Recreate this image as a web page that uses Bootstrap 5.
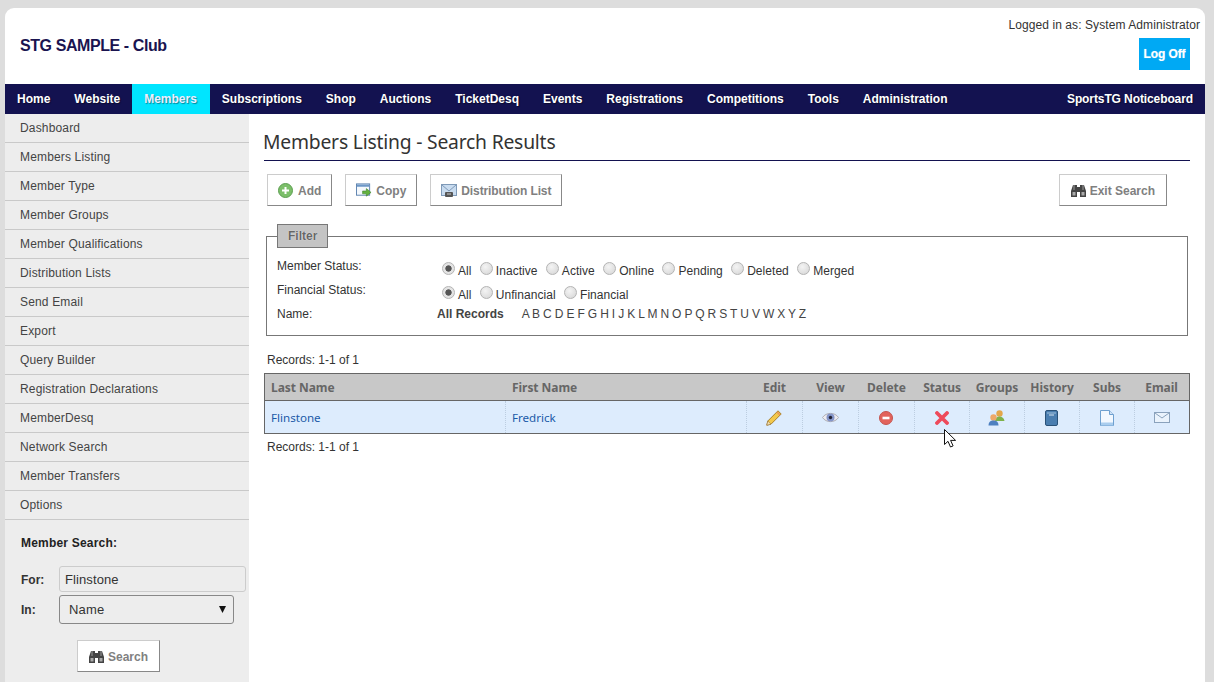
<!DOCTYPE html>
<html lang="en"><head><meta charset="utf-8"><title>Members Listing</title>
<link href="https://cdn.jsdelivr.net/npm/bootstrap@5.3.0/dist/css/bootstrap.min.css" rel="stylesheet">
<style>
html,body{height:100%;overflow:hidden}
body{background:#ddd;font-family:"Liberation Sans",Arial,sans-serif;font-size:12px;color:#333;padding:8px 9px 0 5px}
.shell{background:#fff;border-radius:9px 9px 0 0;height:674px;position:relative;overflow:hidden}
.top-head{height:76px;padding:0 15px}
.club{font-size:16px;font-weight:700;color:#1a1450;margin:0;line-height:76px;letter-spacing:-.42px}
.logged{color:#333;font-size:12px;line-height:14px;padding-top:10px;margin-right:-10px;text-align:right;letter-spacing:.08px}
.logoff{display:block;background:#00a9f4;color:#fff;font-weight:700;font-size:12px;width:51px;height:32px;line-height:33px;text-align:center;text-decoration:none;margin:6px 0 0 auto;letter-spacing:-.1px;text-shadow:0 0 1px #fff8}
.mainbar{background:#131250;height:30px;padding:0}
.mainbar a{color:#fff;font-weight:700;font-size:12px;line-height:30px;padding:0 12px;display:block;text-decoration:none;text-shadow:1px 1px 1px #0006}
.mainbar a.on{background:#00e5ff;color:#eef;padding-right:13px}
.mainbar a.notice{letter-spacing:-.1px}
.cols{height:568px}
.side{width:244px;flex:none;background:#ededed}
.side-list a{display:block;height:29px;line-height:29px;padding-left:15px;color:#444;font-size:12px;letter-spacing:.16px;text-decoration:none;border-bottom:1px solid #c9c9c9}
.side-form{padding:16px 0 0 16px;position:relative}
.side-form h6{font-size:12px;font-weight:700;color:#222;margin:0 0 16px;line-height:14px;letter-spacing:.2px}
.lbl{width:38px;font-weight:700;color:#333;flex:none}
.lbl-up{position:relative;top:-1px}
.box-in{width:187px;height:26px;background:#ededed;border:1px solid #ccc;border-radius:3px;font-size:13px;padding:0 5px;color:#333;font-family:inherit;letter-spacing:.1px;margin-bottom:3px}
.box-sel{width:175px;height:29px;border:1px solid #888;border-radius:3px;font-size:13px;padding:0 9px;color:#333;font-family:inherit;background-color:#ededed;letter-spacing:.2px;appearance:none;background-image:url("data:image/svg+xml,%3Csvg xmlns='http://www.w3.org/2000/svg' width='8' height='7'%3E%3Cpath d='M0 0h7L3.500 7z' fill='%23111'/%3E%3C/svg%3E");background-repeat:no-repeat;background-position:right 6px center}
.gbtn{display:inline-flex;align-items:center;gap:4px;height:32px;background:#fff;border:1px solid;border-color:#ccc #888 #888 #ccc;color:#808080;font-weight:700;font-size:12px;text-decoration:none;padding:1px 10px 0}
.gbtn svg{flex:none}
.gbtn-find{padding:1px 11px 0}
.gbtn-tight{letter-spacing:-.12px}
.content{flex:1;padding:0 15px;min-width:0}
.page-title{font-family:"Noto Sans","Open Sans",sans-serif;font-size:19.300px;font-weight:400;color:#333;margin:0;height:47px;line-height:56px;border-bottom:1px solid #131250;letter-spacing:-.2px;text-indent:-1px}
.toolrow{margin:13px 23px 0 3px;gap:13px}
.fset{margin:18px 2px 0 2px;border:1px solid #777;padding:0 10px;height:112px;position:relative;display:block;min-width:0}
.fset legend{float:none;width:auto;margin:0 0 6px;padding:0 10px;height:24px;line-height:22px;background:#c4c4c4;border:1px solid #777;color:#666;font-weight:700;font-size:12px;text-shadow:0 0 1px #fff}
.frow{height:24px;line-height:24px;color:#333}
.frow .fk{width:160px;flex:none}
.fv{display:flex;align-items:center;padding-top:7px;height:24px}
.rad{appearance:none;width:13px;height:13px;border-radius:50%;border:1px solid #b4b4b4;background:radial-gradient(circle at 40% 35%,#f4f4f4,#d4d4d4);margin:0 3px 0 5px;position:relative;top:-1px;flex:none}
.rad:checked{background:radial-gradient(circle,#555 0 2.800px,#e4e4e4 3.500px)}
.rlab{margin-right:3.300px;position:relative;top:1px;letter-spacing:.05px}
.alpha{margin-left:18px;color:#444;letter-spacing:-.16px}
.recs{color:#333;margin:17px 0 0 3px;line-height:14px}
.grid{width:926px;margin:6px 0 6px;border:1px solid #666;table-layout:fixed;border-collapse:separate;border-spacing:0;font-family:"Noto Sans",sans-serif}
.grid th{background:#c8c8c8;color:#666;font-weight:700;font-size:12px;height:27px;padding:1px 6px 0;border:0;border-bottom:1px solid #666;letter-spacing:-.05px}
.grid td{background:#ddecfd;height:32px;padding:1px 6px 0;border:0;border-right:1px dotted #bccde0;font-size:11.600px;vertical-align:middle}
.grid td:last-child{border-right:0}
.grid th.ic,.grid td.ic{text-align:center;padding:1px 1px 0 0}
.grid a{color:#1a5aa8;text-decoration:none}
.grid svg{display:block;margin:0 auto}
.pointer{position:absolute;left:939px;top:421px}
.recs-low{margin:0 0 0 3px}
.searchline{padding-left:56px;margin-top:16px}
</style></head>
<body>
<div class="shell">
 <header class="top-head d-flex justify-content-between">
  <h1 class="club">STG SAMPLE - Club</h1>
  <div><div class="logged">Logged in as: System Administrator</div><a class="logoff" href="#">Log Off</a></div>
 </header>
 <nav class="mainbar d-flex">
  <a href="#">Home</a><a href="#">Website</a><a href="#" class="on">Members</a><a href="#">Subscriptions</a><a href="#">Shop</a><a href="#">Auctions</a><a href="#">TicketDesq</a><a href="#">Events</a><a href="#">Registrations</a><a href="#">Competitions</a><a href="#">Tools</a><a href="#">Administration</a>
  <a href="#" class="ms-auto notice">SportsTG Noticeboard</a>
 </nav>
 <div class="cols d-flex">
  <aside class="side">
   <div class="side-list">
    <a href="#">Dashboard</a><a href="#">Members Listing</a><a href="#">Member Type</a><a href="#">Member Groups</a><a href="#">Member Qualifications</a><a href="#">Distribution Lists</a><a href="#">Send Email</a><a href="#">Export</a><a href="#">Query Builder</a><a href="#">Registration Declarations</a><a href="#">MemberDesq</a><a href="#">Network Search</a><a href="#">Member Transfers</a><a href="#">Options</a>
   </div>
   <div class="side-form">
    <h6>Member Search:</h6>
    <div class="d-flex align-items-center"><span class="lbl lbl-up">For:</span><input class="box-in" value="Flinstone"></div>
    <div class="d-flex align-items-center"><span class="lbl">In:</span><select class="box-sel"><option>Name</option></select></div>
    <div class="d-flex searchline"><a class="gbtn gbtn-find" href="#"><svg width="15" height="13" viewBox="0 0 15 13"><path d="M2 1h4v2h3V1h4l2 6v6H9V8H6v5H0V7z" fill="#444"/><path d="M1.500 8h3v3.500h-3zM10.500 8h3v3.500h-3z" fill="#aaa"/><path d="M3 1v5M12 1v5" stroke="#999"/></svg>Search</a></div>
   </div>
  </aside>
  <main class="content">
   <h2 class="page-title">Members Listing - Search Results</h2>
   <div class="toolrow d-flex justify-content-start">
    <a class="gbtn" href="#"><svg width="16" height="15" viewBox="0 0 16 15"><circle cx="7.500" cy="7.500" r="7" fill="#7cbf6a" stroke="#5c9e50"/><path d="M7.500 4v7M4 7.500h7" stroke="#fff" stroke-width="2"/></svg>Add</a>
    <a class="gbtn" href="#"><svg width="16" height="15" viewBox="0 0 17 15"><rect x=".5" y=".5" width="14" height="12" fill="#f4f8fc" stroke="#5a80ae"/><path d="M1 1h13v2.500H1z" fill="#6d97c7"/><path d="M7 8h4V5.500L16 9.500l-5 4V11H7z" fill="#62b13f" stroke="#3f7f2a" stroke-width=".6"/></svg>Copy</a>
    <a class="gbtn gbtn-tight" href="#"><svg width="16" height="15" viewBox="0 0 16 15"><rect x=".5" y="1.500" width="15" height="11" fill="#c9dcf0" stroke="#7f9ab8"/><path d="M1 2l7 6 7-6" fill="none" stroke="#7f9ab8"/><rect x="4" y="9" width="8" height="5" rx="1" fill="#555"/><path d="M6 11h4" stroke="#ccc"/></svg>Distribution List</a>
    <a class="gbtn gbtn-find ms-auto" href="#"><svg width="15" height="13" viewBox="0 0 15 13"><path d="M2 1h4v2h3V1h4l2 6v6H9V8H6v5H0V7z" fill="#444"/><path d="M1.500 8h3v3.500h-3zM10.500 8h3v3.500h-3z" fill="#aaa"/><path d="M3 1v5M12 1v5" stroke="#999"/></svg>Exit Search</a>
   </div>
   <fieldset class="fset">
    <legend>Filter</legend>
    <div class="frow d-flex"><span class="fk">Member Status:</span><div class="fv"><input type="radio" class="rad" name="a" checked><span class="rlab">All</span><input type="radio" class="rad" name="a"><span class="rlab">Inactive</span><input type="radio" class="rad" name="a"><span class="rlab">Active</span><input type="radio" class="rad" name="a"><span class="rlab">Online</span><input type="radio" class="rad" name="a"><span class="rlab">Pending</span><input type="radio" class="rad" name="a"><span class="rlab">Deleted</span><input type="radio" class="rad" name="a"><span class="rlab">Merged</span></div></div>
    <div class="frow d-flex"><span class="fk">Financial Status:</span><div class="fv"><input type="radio" class="rad" name="b" checked><span class="rlab">All</span><input type="radio" class="rad" name="b"><span class="rlab">Unfinancial</span><input type="radio" class="rad" name="b"><span class="rlab">Financial</span></div></div>
    <div class="frow d-flex"><span class="fk">Name:</span><div><b style="color:#444">All Records</b><span class="alpha">A B C D E F G H I J K L M N O P Q R S T U V W X Y Z</span></div></div>
   </fieldset>
   <p class="recs">Records: 1-1 of 1</p>
   <table class="grid">
    <colgroup><col style="width:241px"><col style="width:241px"><col style="width:56px"><col style="width:56px"><col style="width:56px"><col style="width:55px"><col style="width:55px"><col style="width:55px"><col style="width:55px"><col></colgroup>
    <thead><tr><th>Last Name</th><th>First Name</th><th class="ic">Edit</th><th class="ic">View</th><th class="ic">Delete</th><th class="ic">Status</th><th class="ic">Groups</th><th class="ic">History</th><th class="ic">Subs</th><th class="ic">Email</th></tr></thead>
    <tbody><tr>
     <td><a href="#">Flinstone</a></td><td><a href="#">Fredrick</a></td>
     <td class="ic"><svg width="16" height="16" viewBox="0 0 16 16"><path d="M12 .8l3.200 3.200L5 14.200l-4.200 1 1-4.200z" fill="#f2c84b" stroke="#a9802a"/><path d="M11 2l3 3" stroke="#e8925a" stroke-width="1.500"/><path d="M1.800 11l3.200 3.200-4.200 1z" fill="#f3dfb0" stroke="#8a6a3a" stroke-width=".5"/></svg></td>
     <td class="ic"><svg width="17" height="13" viewBox="0 0 17 13"><path d="M.5 6.500C4 1 13 1 16.500 6.500 13 12 4 12 .5 6.500z" fill="#ecebef" stroke="#b0aeb4"/><circle cx="8.500" cy="6.500" r="4" fill="#8495c8"/><circle cx="8.500" cy="6.500" r="1.700" fill="#223"/></svg></td>
     <td class="ic"><svg width="14" height="14" viewBox="0 0 14 14"><circle cx="7" cy="7" r="6.500" fill="#e2635c" stroke="#c4544f"/><path d="M3.500 7h7" stroke="#fff" stroke-width="2.600"/></svg></td>
     <td class="ic"><svg width="14" height="14" viewBox="0 0 14 14"><path d="M2 2l10 10M12 2L2 12" stroke="#ee4a5b" stroke-width="3.800" stroke-linecap="round"/></svg></td>
     <td class="ic"><svg width="17" height="16" viewBox="0 0 17 16"><circle cx="11.500" cy="3.500" r="3.200" fill="#e3a64a"/><path d="M7 11c0-3 2-4.500 4.500-4.500S16 8 16.500 11z" fill="#7eb24a"/><circle cx="5.500" cy="7.500" r="3.200" fill="#eda868"/><path d="M.5 15.500c0-4 2.500-5 5-5s5 1 5 5z" fill="#4d80c0"/></svg></td>
     <td class="ic"><svg width="13" height="16" viewBox="0 0 13 16"><rect x=".5" y=".5" width="12" height="15" rx="1.500" fill="#4a7eb0" stroke="#2a5278"/><path d="M2 3h9" stroke="#9fc0dc"/><path d="M4 5h5" stroke="#d5e4f0"/></svg></td>
     <td class="ic"><svg width="14" height="16" viewBox="0 0 14 16"><path d="M.5.500h9l4 4v11H.5z" fill="#f2f8ff" stroke="#6ea0d0"/><path d="M9.500.500v4h4" fill="#cfe2f6" stroke="#6ea0d0"/><path d="M1 12.500h12v3H1z" fill="#a9cdee"/></svg></td>
     <td class="ic"><svg width="16" height="11" viewBox="0 0 16 11"><rect x=".5" y=".5" width="15" height="10" fill="#eaf3fc" stroke="#8aa2bc"/><path d="M1 1l7 5 7-5" fill="none" stroke="#8aa2bc"/></svg></td>
    </tr></tbody>
   </table>
   <p class="recs recs-low">Records: 1-1 of 1</p>
  </main>
 </div>
 <svg class="pointer" width="13" height="19" viewBox="0 0 13 19"><path d="M.5.500v15l3.500-3.200 2.500 5.700 2.600-1.100-2.500-5.500h5z" fill="#fff" stroke="#111"/></svg>
</div>
</body></html>
